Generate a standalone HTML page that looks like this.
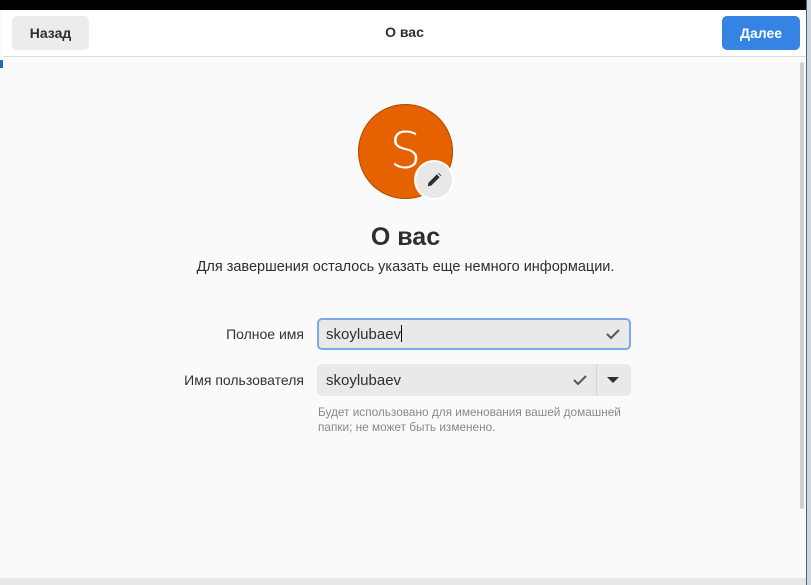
<!DOCTYPE html>
<html><head><meta charset="utf-8"><style>
body{margin:0;width:811px;height:585px;overflow:hidden;background:#fafafa;font-family:"Liberation Sans","DejaVu Sans",sans-serif;position:relative}
.top{position:absolute;left:0;top:0;width:811px;height:10px;background:#000}
.win{position:absolute;left:3px;top:10px;width:803px;height:568px;background:#fafafa}
.hdr{position:absolute;left:0;top:0;width:803px;height:46px;background:#fff;border-bottom:1px solid #dcdcdc}
.btn{position:absolute;top:6px;height:34px;border-radius:5px;font-size:14px;font-weight:bold;line-height:34px;text-align:center}
.right{position:absolute;left:806px;top:0;width:5px;height:585px;background:#d6d6d6;border-left:1px solid #2a6ab0}
.bottom{position:absolute;left:0;top:578px;width:806px;height:7px;background:#e8e8e8}
.lbl{position:absolute;font-size:14px;color:#333;text-align:right;width:200px}
.inp{position:absolute;left:317px;width:314px;height:32px;border-radius:5px;background:#e9e9e9;font-size:15px;color:#2e2e2e;line-height:32px;box-sizing:border-box;padding-left:9px}
</style></head><body>
<div class="top"></div>
<div style="position:absolute;left:0;top:60px;width:3px;height:8px;background:#2a6ab0"></div>
<div class="win">
 <div class="hdr">
  <div class="btn" style="left:9px;width:77px;background:#ececec;color:#2e2e2e">Назад</div>
  <div style="position:absolute;left:0;width:803px;top:14px;text-align:center;font-size:14px;font-weight:bold;color:#2e2e2e">О вас</div>
  <div class="btn" style="left:719px;width:78px;background:#3584e4;color:#fff">Далее</div>
 </div>
 <div style="position:absolute;left:797px;top:52px;width:4px;height:447px;background:#cfcfcf;border-radius:2px"></div>
</div>
<div style="position:absolute;left:358px;top:104px;width:95px;height:95px;border-radius:50%;background:#e66100;box-shadow:0 0 0 1px #b24b00 inset;color:#fff;font-size:50px;text-align:center;line-height:95px;font-family:'DejaVu Sans',sans-serif;font-weight:300">S</div>
<div style="position:absolute;left:416px;top:162px;width:36px;height:36px;border-radius:50%;background:#e8e8e8;box-shadow:0 0 0 2px #fff"></div>
<svg style="position:absolute;left:425px;top:171px" width="18" height="18" viewBox="0 0 16 16"><path d="M2.5 13.5 L3 10.5 L10.5 3 L13 5.5 L5.5 13 Z" fill="#2e2e2e"/><path d="M11.5 2 L12 1.5 L14.5 4 L14 4.5Z" fill="#2e2e2e"/></svg>
<div style="position:absolute;left:0;width:811px;top:223px;text-align:center;font-size:25px;font-weight:bold;color:#2e2e2e">О вас</div>
<div style="position:absolute;left:0;width:811px;top:259px;text-align:center;font-size:14.5px;color:#2e2e2e">Для завершения осталось указать еще немного информации.</div>
<div class="lbl" style="left:104px;top:326px">Полное имя</div>
<div class="lbl" style="left:104px;top:372px">Имя пользователя</div>
<div class="inp" style="top:318px;border:2px solid #7ca8e4;padding-left:7px;line-height:29px">skoylubaev<span style="display:inline-block;width:1px;height:17px;background:#000;vertical-align:-3px"></span>
<svg style="position:absolute;right:9px;top:8px" width="14" height="12" viewBox="0 0 14 12"><path d="M1 6 L5 10 L13 2" stroke="#555" stroke-width="2" fill="none"/></svg></div>
<div class="inp" style="top:364px;line-height:33px">skoylubaev
<svg style="position:absolute;left:256px;top:10px" width="14" height="12" viewBox="0 0 14 12"><path d="M1 6 L5 10 L13 2" stroke="#555" stroke-width="2" fill="none"/></svg>
<div style="position:absolute;left:279px;top:0;width:1px;height:32px;background:#d4d4d4"></div>
<svg style="position:absolute;left:290px;top:12px" width="12" height="8"><path d="M0 1 L12 1 L6 7Z" fill="#2e2e2e"/></svg></div>
<div style="position:absolute;left:318px;top:405px;font-size:11.8px;line-height:15px;color:#888">Будет использовано для именования вашей домашней<br>папки; не может быть изменено.</div>
<div class="right"></div>
<div class="bottom"></div>
</body></html>
